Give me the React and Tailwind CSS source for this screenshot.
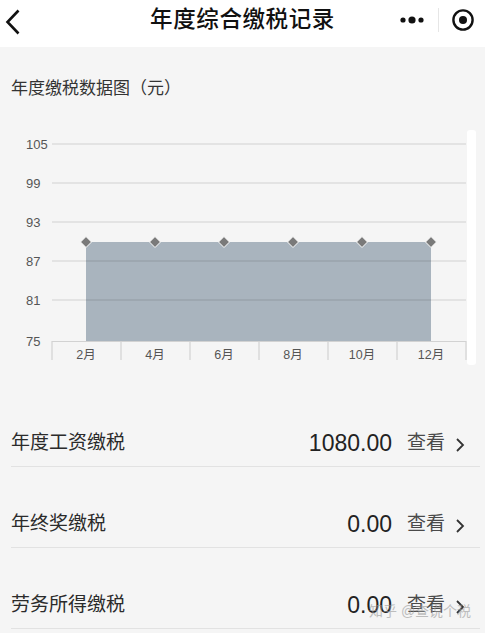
import React from "react";

const months = ["2月", "4月", "6月", "8月", "10月", "12月"];
const yTicks = [
  { label: "105", y: 34 },
  { label: "99", y: 73 },
  { label: "93", y: 112 },
  { label: "87", y: 151 },
  { label: "81", y: 190 },
];

const records = [
  { name: "年度工资缴税", amount: "1080.00" },
  { name: "年终奖缴税", amount: "0.00" },
  { name: "劳务所得缴税", amount: "0.00" },
];

const Header = () => (
  <div className="h-[47px] bg-white grid grid-cols-[1fr_auto_1fr] items-center">
    <div className="pl-[5px] -mt-[4px]">
      <svg width="16" height="26" viewBox="0 0 16 26">
        <path d="M13.5 1.5 L2.5 13 L13.5 24.5" fill="none" stroke="#111" strokeWidth="2.6" />
      </svg>
    </div>
    <h1 className="text-[22.5px] font-medium text-[#111] tracking-[0.6px] -mt-[8px]">
      年度综合缴税记录
    </h1>
    <div className="flex justify-end items-center pr-[10px] -mt-[8px]">
      <svg width="26" height="10" viewBox="0 0 26 10">
        <circle cx="3" cy="5" r="2.6" fill="#111" />
        <circle cx="12" cy="5" r="3.6" fill="#111" />
        <circle cx="21" cy="5" r="2.6" fill="#111" />
      </svg>
      <div className="w-px h-[24px] bg-[#e6e6e6] mx-[12px]" />
      <svg width="24" height="24" viewBox="0 0 24 24">
        <circle cx="12" cy="12" r="9.6" fill="none" stroke="#111" strokeWidth="2.4" />
        <circle cx="12" cy="12" r="4" fill="#111" />
      </svg>
    </div>
  </div>
);

const Chart = () => (
  <svg width="485" height="276" viewBox="0 0 485 276" className="block">
    {yTicks.map((t) => (
      <text key={t.label} x="26" y={t.y + 5} fontSize="13" fill="#555" fontFamily="Liberation Sans, sans-serif">
        {t.label}
      </text>
    ))}
    <text x="26" y="236" fontSize="13" fill="#555" fontFamily="Liberation Sans, sans-serif">75</text>
    <path d="M86 132 L431 132 L431 231 L86 231 Z" fill="#a9b4be" />
    {yTicks.map((t) => (
      <line key={t.label} x1="52" x2="466" y1={t.y} y2={t.y} stroke="#000" strokeOpacity="0.14" strokeWidth="1.2" />
    ))}
    <line x1="52" x2="466" y1="231.5" y2="231.5" stroke="#d2d2d2" strokeWidth="1.2" />
    {[52, 121, 190, 259, 328, 397, 466].map((x) => (
      <line key={x} x1={x} x2={x} y1="231" y2="250" stroke="#d2d2d2" strokeWidth="1.2" />
    ))}
    {months.map((m, i) => (
      <text key={m} x={86 + i * 69} y="249" fontSize="12.5" fill="#555" textAnchor="middle" fontFamily="Liberation Sans, Noto Sans CJK SC, sans-serif">
        {m}
      </text>
    ))}
    {months.map((m, i) => {
      const cx = 86 + i * 69;
      return (
        <path key={m} d={`M${cx} 126.5 L${cx + 5.5} 132 L${cx} 137.5 L${cx - 5.5} 132 Z`} fill="#7a7a7a" stroke="#fff" strokeWidth="1" />
      );
    })}
    <rect x="467" y="20" width="9" height="235" rx="3" fill="#fff" />
  </svg>
);

export default function App() {
  return (
    <div className="relative w-[485px] h-[633px] overflow-hidden bg-[#f5f5f5] font-['Liberation_Sans','Noto_Sans_CJK_SC',sans-serif]">
      <Header />
      <div className="pt-[30px] pl-[11px] text-[17px] leading-[24px] text-[#333]">年度缴税数据图（元）</div>
      <div className="mt-[9px]">
        <Chart />
      </div>
      <div className="pl-[11px] pr-[5px]">
        {records.map((r) => (
          <div key={r.name} className="h-[81px] flex items-end pb-[10px] border-b border-[#e2e2e2]">
            <div className="flex items-center w-full">
              <span className="flex-1 text-[19px] leading-[26px] text-[#2b2b2b]">{r.name}</span>
              <span className="text-[23px] leading-[26px] text-[#222]">{r.amount}</span>
              <span className="ml-[15px] text-[19px] leading-[26px] text-[#4a4a4a]">查看</span>
              <svg width="10" height="16" viewBox="0 0 10 16" className="ml-[10px] mr-[15px] mt-[4px]">
                <path d="M2 2 L8 8 L2 14" fill="none" stroke="#333" strokeWidth="1.8" />
              </svg>
            </div>
          </div>
        ))}
      </div>
      <div className="absolute left-[369px] top-[601px] whitespace-nowrap text-[14px] text-[#999] opacity-60">
        知乎 @查说个税
      </div>
    </div>
  );
}
